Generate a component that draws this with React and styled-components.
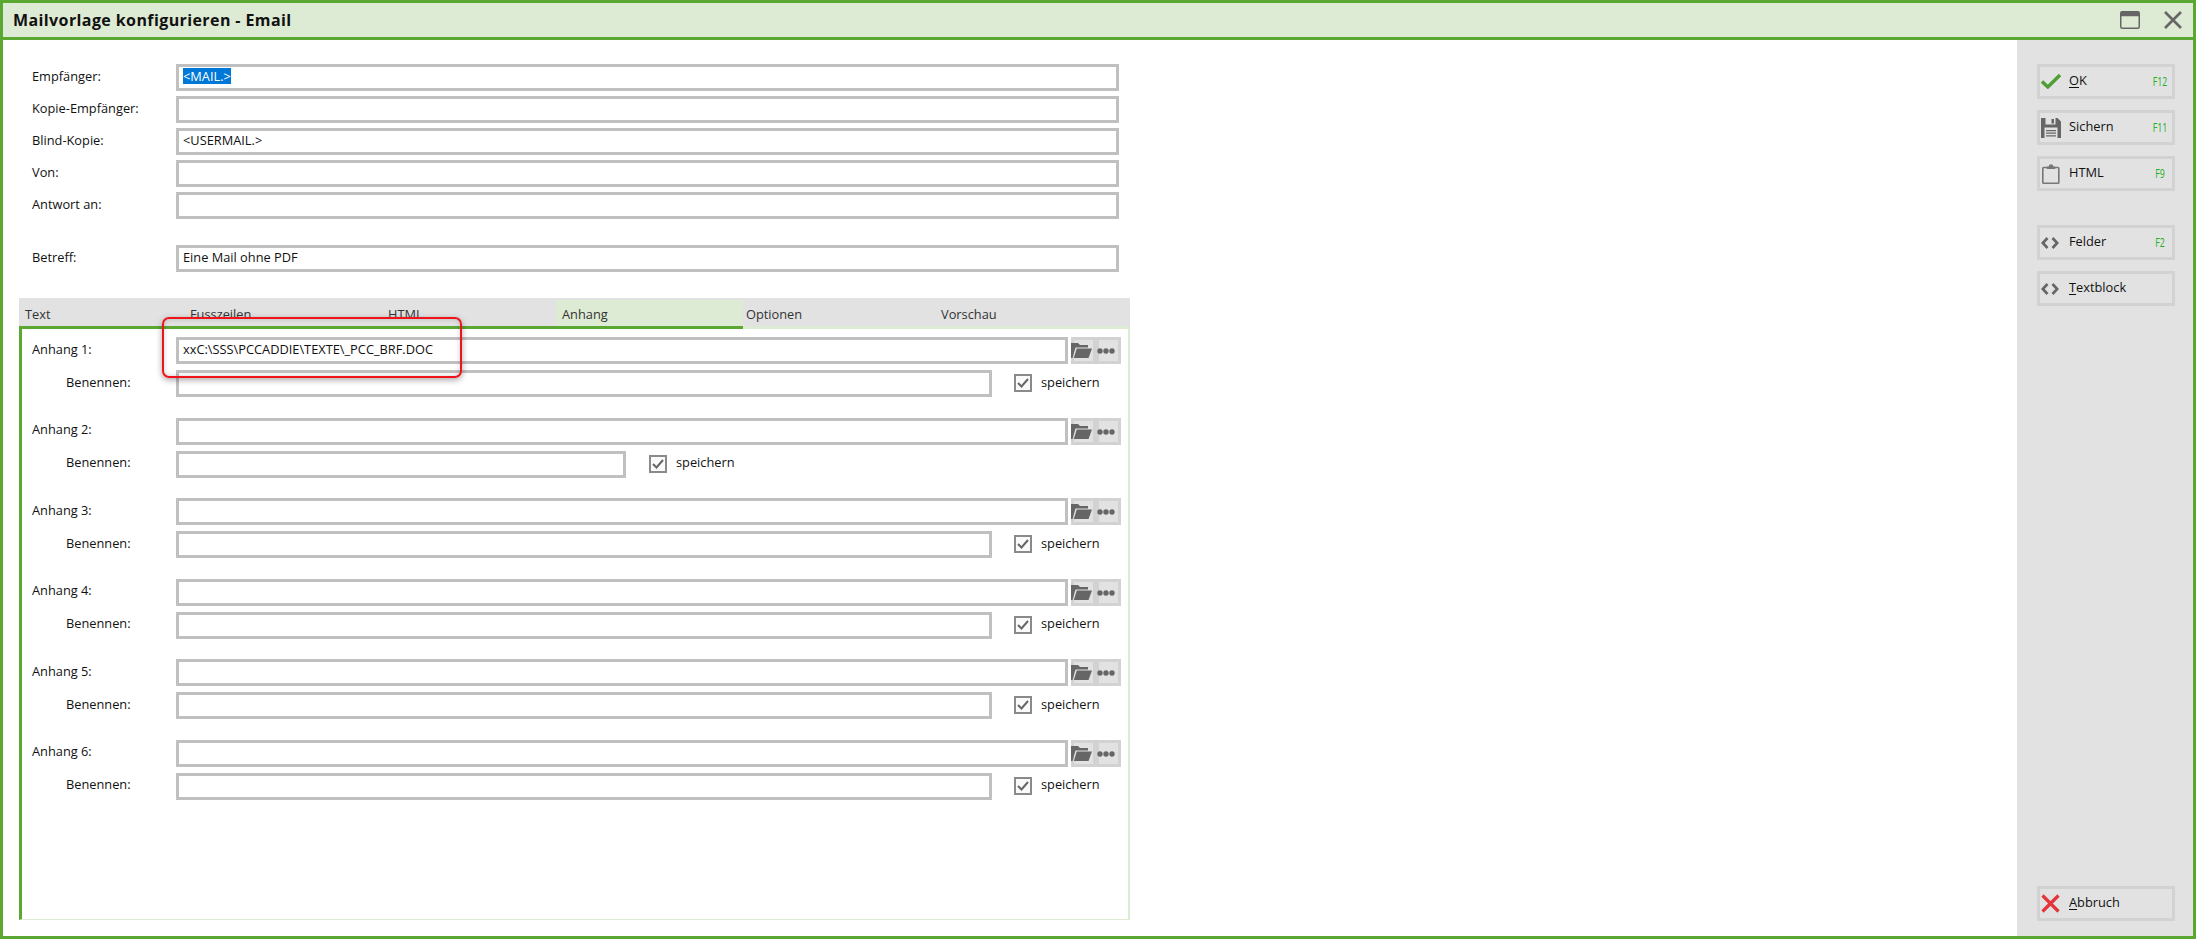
import React from "react"
import styled, { createGlobalStyle } from "styled-components"

const GlobalStyle = createGlobalStyle`
  html, body {
    margin: 0;
    padding: 0;
    background: #fff;
  }
  * {
    box-sizing: border-box;
  }
`

const Window = styled.div`
  width: 2196px;
  height: 939px;
  border: 3px solid #5aa832;
  display: flex;
  flex-direction: column;
  position: relative;
  overflow: hidden;
  font-family: "Open Sans", sans-serif;
  font-size: 12.8px;
  color: #111;
  background: #fff;
`

const TitleBar = styled.header`
  height: 37px;
  flex: none;
  background: #deebd4;
  border-bottom: 3px solid #5aa832;
  display: flex;
  align-items: center;
  padding: 0 11px 0 10px;
`

const Title = styled.h1`
  margin: 0;
  font-size: 16px;
  font-weight: 700;
  letter-spacing: 0.4px;
  color: #111;
  flex: 1;
`

const TitleIcon = styled.svg`
  display: block;
  margin-left: ${(p) => p.$gap || 0}px;
`

const Body = styled.div`
  flex: 1;
  display: flex;
  min-height: 0;
`

const Main = styled.main`
  flex: 1;
  padding-top: 24px;
  display: flex;
  flex-direction: column;
`

const HeadForm = styled.div`
  padding-left: 29px;
  display: flex;
  flex-direction: column;
  gap: 5px;
`

const Row = styled.div`
  display: flex;
  align-items: center;
  margin-top: ${(p) => p.$top || 0}px;
`

const Label = styled.label`
  width: 144px;
  flex: none;
  padding-left: ${(p) => p.$indent || 0}px;
  padding-bottom: 4px;
`

const Field = styled.div`
  width: ${(p) => p.$width}px;
  height: 27px;
  flex: none;
  border: 3px solid #c0c0c0;
  background: #fff;
  padding: 0 4px;
  line-height: 18px;
  white-space: nowrap;
  overflow: hidden;
`

const Selected = styled.span`
  display: inline-block;
  height: 16px;
  line-height: 16px;
  background: #0078d7;
  color: #fff;
`

const TabBlock = styled.section`
  margin: 26px 0 0 16px;
  width: 1111px;
  display: flex;
  flex-direction: column;
`

const TabStrip = styled.nav`
  height: 31px;
  background: #e2e2e2;
  display: flex;
  padding-top: 2px;
`

const Tab = styled.div`
  width: ${(p) => p.$width}px;
  padding: 5px 0 0 ${(p) => p.$pad}px;
  color: #333;
  background: ${(p) => (p.$active ? "#deebd4" : "transparent")};
  border-bottom: 3px solid ${(p) => (p.$done || p.$active ? "#5aa832" : "#deebd4")};
`

const TabPanel = styled.div`
  height: 591px;
  border-left: 3px solid #5aa832;
  border-right: 2px solid #deebd4;
  border-bottom: 1px solid #deebd4;
  padding: 8px 0 0 10px;
  display: flex;
  flex-direction: column;
`

const CheckText = styled.span`
  padding-bottom: 4px;
`

const Attachment = styled.div`
  display: flex;
  flex-direction: column;
  gap: 6px;
  margin-bottom: 20px;
  /* even blocks sit a pixel lower but their text does not follow */
  &:nth-child(even) {
    margin-top: 1px;
    ${Label}, ${CheckText} {
      padding-bottom: 6px;
    }
  }
`

const PickerGroup = styled.div`
  margin-left: 3px;
  width: 50px;
  height: 27px;
  background: #d2d2d2;
  display: flex;
  gap: 6px;
  padding: 3px;
`

const PickerButton = styled.div`
  flex: 1;
  min-width: 0;
  background: #e2e2e2;
  display: flex;
  align-items: center;
  color: #666;
  svg {
    flex: none;
    margin-left: ${(p) => p.$shift}px;
  }
`

const CheckBox = styled.span`
  width: 18px;
  height: 18px;
  margin: 0 9px 1px ${(p) => p.$gap}px;
  border: 2px solid #8a8a8a;
  background: #fafafa;
  display: flex;
  align-items: center;
  justify-content: center;
`

const Sidebar = styled.aside`
  width: 176px;
  flex: none;
  background: #e2e2e2;
  padding: 24px 18px 15px 20px;
  display: flex;
  flex-direction: column;
  gap: 11px;
`

const SideButton = styled.div`
  height: 35px;
  border: 3px solid #d2d2d2;
  display: flex;
  align-items: center;
  margin-top: ${(p) => p.$top || 0};
`

const SideIcon = styled.span`
  width: 29px;
  flex: none;
  padding-left: 1px;
  display: flex;
  color: #666;
`

const SideText = styled.span`
  flex: 1;
  padding-bottom: 3px;
  color: #111;
  u {
    text-underline-offset: 2px;
  }
`

const KeyHint = styled.span`
  width: 24px;
  padding-bottom: 2px;
  text-align: center;
  color: #1fb01f;
  font-size: 13px;
  transform: scaleX(0.68);
`

const Annotation = styled.div`
  position: absolute;
  left: 159px;
  top: 314px;
  width: 300px;
  height: 61px;
  border: 2px solid #f0141a;
  border-radius: 7px;
  box-shadow: 0 2px 6px rgba(0, 0, 0, 0.35), inset 0 0 5px rgba(0, 0, 0, 0.2);
  pointer-events: none;
`

const CodeIcon = () => (
  <svg width="18" height="12" viewBox="0 0 18 12" fill="none" stroke="#666" strokeWidth="2.6">
    <path d="M6.5 1 1.8 6l4.7 5M11.500 1l4.700 5-4.700 5" />
  </svg>
)

const FolderIcon = () => (
  <svg width="21" height="15" viewBox="0 0 21 15" fill="#666">
    <path d="M0 0h7l2 2h8v2.5H4.5L1.5 15H0z" />
    <path d="M5.8 5.5H21L17.5 15H2.8z" />
  </svg>
)

const DotsIcon = () => (
  <svg width="18" height="6" viewBox="0 0 18 6" fill="#666">
    <circle cx="3" cy="3" r="2.7" />
    <circle cx="9" cy="3" r="2.7" />
    <circle cx="15" cy="3" r="2.7" />
  </svg>
)

const FloppyIcon = () => (
  <svg width="20" height="20" viewBox="0 0 20 20">
    <path d="M0 0h16.500L20 3.500V20H0z" fill="#666" />
    <path d="M4.500 0h10v6.500h-10z" fill="#e2e2e2" />
    <path d="M10.500 1h2.500v4.500h-2.500z" fill="#666" />
    <path d="M3.500 9.500h13V20h-13z" fill="#e2e2e2" />
    <path d="M5 12h10v1.200H5zM5 14.600h10v1.200H5zM5 17.200h10v1.200H5z" fill="#666" />
  </svg>
)

const attachments = [
  { n: 1, value: "xxC:\\SSS\\PCCADDIE\\TEXTE\\_PCC_BRF.DOC", width: 816, gap: 22 },
  { n: 2, value: "", width: 450, gap: 23 },
  { n: 3, value: "", width: 816, gap: 22 },
  { n: 4, value: "", width: 816, gap: 22 },
  { n: 5, value: "", width: 816, gap: 22 },
  { n: 6, value: "", width: 816, gap: 22 },
]

const tabs = [
  { label: "Text", width: 165, pad: 6, done: true },
  { label: "Fusszeilen", width: 199, pad: 6, done: true },
  { label: "HTML", width: 173, pad: 5, done: true },
  { label: "Anhang", width: 187, pad: 6, active: true },
  { label: "Optionen", width: 192, pad: 3 },
  { label: "Vorschau", width: 195, pad: 6 },
]

const App = () => (
  <>
    <GlobalStyle />
    <Window>
      <TitleBar>
        <Title>Mailvorlage konfigurieren - Email</Title>
        <TitleIcon width="20" height="18" viewBox="0 0 20 18">
          <rect x="0.75" y="0.75" width="18.5" height="16.5" rx="1.5" fill="none" stroke="#666" strokeWidth="1.5" />
          <rect x="0.75" y="0.75" width="18.5" height="4.5" fill="#666" />
        </TitleIcon>
        <TitleIcon $gap={24} width="18" height="18" viewBox="0 0 18 18" stroke="#666" strokeWidth="2.6">
          <path d="M1 1l16 16M17 1 1 17" />
        </TitleIcon>
      </TitleBar>
      <Body>
        <Main>
          <HeadForm>
            <Row>
              <Label>Empfänger:</Label>
              <Field $width={943}>
                <Selected>&lt;MAIL.&gt;</Selected>
              </Field>
            </Row>
            <Row>
              <Label>Kopie-Empfänger:</Label>
              <Field $width={943} />
            </Row>
            <Row>
              <Label>Blind-Kopie:</Label>
              <Field $width={943}>&lt;USERMAIL.&gt;</Field>
            </Row>
            <Row>
              <Label>Von:</Label>
              <Field $width={943} />
            </Row>
            <Row>
              <Label>Antwort an:</Label>
              <Field $width={943} />
            </Row>
            <Row $top={21}>
              <Label>Betreff:</Label>
              <Field $width={943}>Eine Mail ohne PDF</Field>
            </Row>
          </HeadForm>
          <TabBlock>
            <TabStrip>
              {tabs.map((t) => (
                <Tab key={t.label} $width={t.width} $pad={t.pad} $active={t.active} $done={t.done}>
                  {t.label}
                </Tab>
              ))}
            </TabStrip>
            <TabPanel>
              {attachments.map((a) => (
                <Attachment key={a.n}>
                  <Row>
                    <Label>Anhang {a.n}:</Label>
                    <Field $width={892}>{a.value}</Field>
                    <PickerGroup>
                      <PickerButton $shift={-3}>
                        <FolderIcon />
                      </PickerButton>
                      <PickerButton $shift={-2}>
                        <DotsIcon />
                      </PickerButton>
                    </PickerGroup>
                  </Row>
                  <Row>
                    <Label $indent={34}>Benennen:</Label>
                    <Field $width={a.width} />
                    <CheckBox $gap={a.gap}>
                      <svg width="12" height="10" viewBox="0 0 12 10" fill="none" stroke="#666" strokeWidth="2">
                        <path d="M1 5l3.5 3.5L11 1" />
                      </svg>
                    </CheckBox>
                    <CheckText>speichern</CheckText>
                  </Row>
                </Attachment>
              ))}
            </TabPanel>
          </TabBlock>
        </Main>
        <Sidebar>
          <SideButton>
            <SideIcon>
              <svg width="20" height="15" viewBox="0 0 20 15" fill="none" stroke="#4f9e33" strokeWidth="3.4">
                <path d="M1 7.5 6.8 13 19 1" />
              </svg>
            </SideIcon>
            <SideText>
              <u>O</u>K
            </SideText>
            <KeyHint>F12</KeyHint>
          </SideButton>
          <SideButton>
            <SideIcon>
              <FloppyIcon />
            </SideIcon>
            <SideText>Sichern</SideText>
            <KeyHint>F11</KeyHint>
          </SideButton>
          <SideButton>
            <SideIcon>
              <svg width="19" height="20" viewBox="0 0 19 20" fill="none" stroke="#777" strokeWidth="1.6">
                <rect x="1.8" y="3.5" width="16" height="15.7" rx="0.8" />
                <path d="M6 4.5h8V3h-2.5V1H8.500v2H6z" fill="#777" strokeWidth="1" />
              </svg>
            </SideIcon>
            <SideText>HTML</SideText>
            <KeyHint>F9</KeyHint>
          </SideButton>
          <SideButton $top="23px">
            <SideIcon>
              <CodeIcon />
            </SideIcon>
            <SideText>Felder</SideText>
            <KeyHint>F2</KeyHint>
          </SideButton>
          <SideButton>
            <SideIcon>
              <CodeIcon />
            </SideIcon>
            <SideText>
              <u>T</u>extblock
            </SideText>
          </SideButton>
          <SideButton $top="auto">
            <SideIcon>
              <svg width="19" height="19" viewBox="0 0 19 19" stroke="#e5343a" strokeWidth="3.2">
                <path d="M1.500 1.500l16 16M17.500 1.500l-16 16" />
              </svg>
            </SideIcon>
            <SideText>
              <u>A</u>bbruch
            </SideText>
          </SideButton>
        </Sidebar>
      </Body>
      <Annotation />
    </Window>
  </>
)

export default App
